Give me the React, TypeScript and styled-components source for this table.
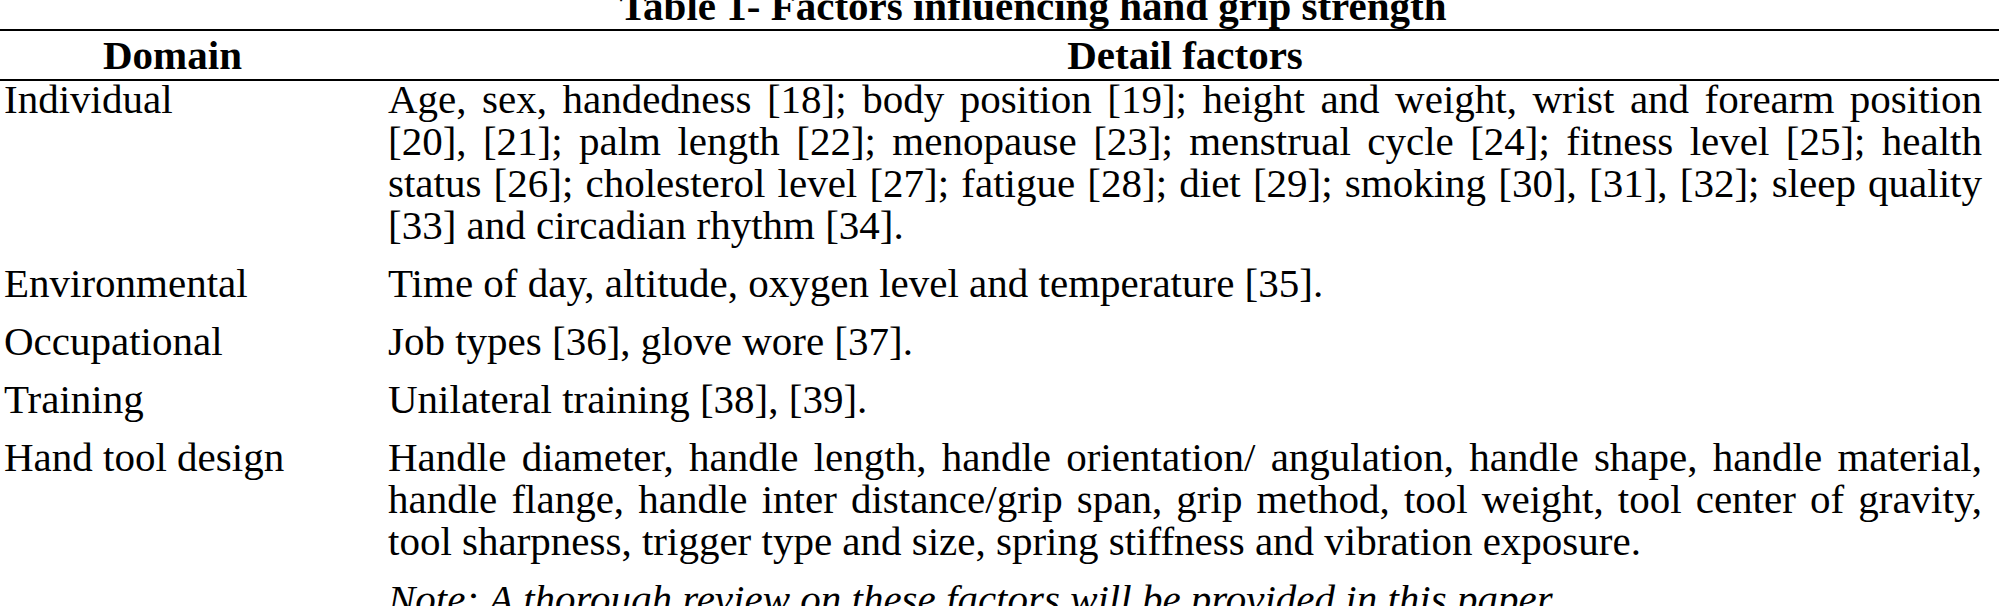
import React from 'react';
import styled, { createGlobalStyle } from 'styled-components';

interface FactorRow {
    domain: string;
    lines: string[];
}

const rows: FactorRow[] = [
    {
        domain: 'Individual',
        lines: [
            'Age, sex, handedness [18]; body position [19]; height and weight, wrist and forearm position',
            '[20], [21]; palm length [22]; menopause [23]; menstrual cycle [24]; fitness level [25]; health',
            'status [26]; cholesterol level [27]; fatigue [28]; diet [29]; smoking [30], [31], [32]; sleep quality',
            '[33] and circadian rhythm [34].'
        ]
    },
    {
        domain: 'Environmental',
        lines: ['Time of day, altitude, oxygen level and temperature [35].']
    },
    {
        domain: 'Occupational',
        lines: ['Job types [36], glove wore [37].']
    },
    {
        domain: 'Training',
        lines: ['Unilateral training [38], [39].']
    },
    {
        domain: 'Hand tool design',
        lines: [
            'Handle diameter, handle length, handle orientation/ angulation, handle shape, handle material,',
            'handle flange, handle inter distance/grip span, grip method, tool weight, tool center of gravity,',
            'tool sharpness, trigger type and size, spring stiffness and vibration exposure.'
        ]
    }
];

const GlobalStyle = createGlobalStyle`
    html, body {
        margin: 0;
        padding: 0;
        background: #ffffff;
    }

    body {
        font-family: "Liberation Serif", "Times New Roman", serif;
        color: #000000;
        overflow: hidden;
    }
`;

const Page = styled.div`
    width: 1999px;
    height: 606px;
    overflow: hidden;
    font-size: 41px;
    line-height: 42px;
`;

const Caption = styled.div`
    margin-top: -15px;
    padding-left: 67px;
    font-weight: 700;
    text-align: center;
`;

const Table = styled.div`
    margin-top: 2px;
    border-top: 2px solid #000;
`;

const Row = styled.div`
    display: grid;
    grid-template-columns: 345px 1fr;
`;

const HeadRow = styled(Row)`
    padding: 3px 0;
    border-bottom: 2px solid #000;
    font-weight: 700;
`;

const HeadCell = styled.div<{ $detail?: boolean }>`
    text-align: center;
    padding: ${({ $detail }) => ($detail ? '0 17px 0 43px' : '0')};
`;

const Body = styled.div`
    margin-top: -3px;
`;

const BodyRow = styled(Row)`
    padding-bottom: 16px;
`;

const DomainCell = styled.div`
    padding-left: 4px;
`;

const DetailCell = styled.div`
    padding: 0 17px 0 43px;
`;

const Line = styled.span<{ $last?: boolean }>`
    display: block;
    text-align: justify;
    text-align-last: ${({ $last }) => ($last ? 'left' : 'justify')};
`;

const Note = styled.div`
    font-style: italic;
`;

const App: React.FC = () => (
    <Page>
        <GlobalStyle />
        <Caption>Table 1- Factors influencing hand grip strength</Caption>
        <Table>
            <HeadRow>
                <HeadCell>Domain</HeadCell>
                <HeadCell $detail>Detail factors</HeadCell>
            </HeadRow>
            <Body>
                {rows.map((row) => (
                    <BodyRow key={row.domain}>
                        <DomainCell>{row.domain}</DomainCell>
                        <DetailCell>
                            {row.lines.map((line, i) => (
                                <Line key={i} $last={i === row.lines.length - 1}>
                                    {line}
                                </Line>
                            ))}
                        </DetailCell>
                    </BodyRow>
                ))}
                <BodyRow>
                    <DomainCell />
                    <DetailCell>
                        <Note>Note: A thorough review on these factors will be provided in this paper.</Note>
                    </DetailCell>
                </BodyRow>
            </Body>
        </Table>
    </Page>
);

export default App;
